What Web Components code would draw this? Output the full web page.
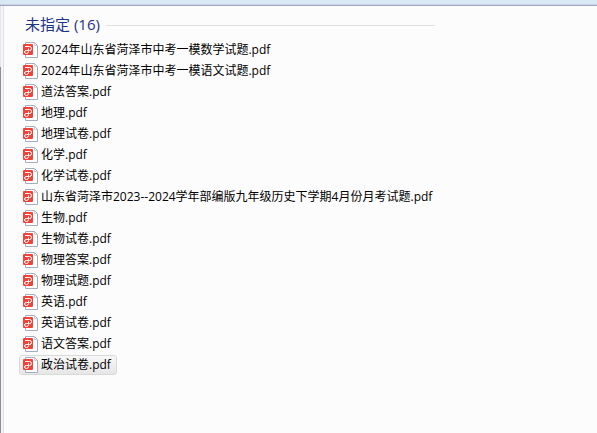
<!DOCTYPE html>
<html lang="zh-CN">
<head>
<meta charset="utf-8">
<title>未指定</title>
<style>
    body{
        margin: 0;
        font-family: "Open Sans", "Noto Sans CJK SC", sans-serif;
        font-size: 12px;
        color: #000;
    }
</style>
</head>
<body>
<explorer-pane>
    <file-group name="未指定" count="16">
        <file-item>2024年山东省菏泽市中考一模数学试题.pdf</file-item>
        <file-item>2024年山东省菏泽市中考一模语文试题.pdf</file-item>
        <file-item>道法答案.pdf</file-item>
        <file-item>地理.pdf</file-item>
        <file-item>地理试卷.pdf</file-item>
        <file-item>化学.pdf</file-item>
        <file-item>化学试卷.pdf</file-item>
        <file-item>山东省菏泽市2023--2024学年部编版九年级历史下学期4月份月考试题.pdf</file-item>
        <file-item>生物.pdf</file-item>
        <file-item>生物试卷.pdf</file-item>
        <file-item>物理答案.pdf</file-item>
        <file-item>物理试题.pdf</file-item>
        <file-item>英语.pdf</file-item>
        <file-item>英语试卷.pdf</file-item>
        <file-item>语文答案.pdf</file-item>
        <file-item selected>政治试卷.pdf</file-item>
    </file-group>
</explorer-pane>

<script>
const paneTemplate = document.createElement('template');
paneTemplate.innerHTML = `
    <style>
    :host{
        display: flex;
        flex-direction: column;
        min-height: 100vh;
        background: #fcfcfc;
    }
    .toolbar{
        height: 4px;
        background: #dae7f5;
        border-bottom: 1px solid #c5d3e5;
    }
    .body{
        flex: 1;
        display: flex;
        border-top: 1px solid #a0abc3;
    }
    .scroll{
        width: 1px;
        padding-top: 61px;
        background: #e6e6e6;
        display: flex;
    }
    .thumb{
        flex: 1;
        background: #8e8e8e;
    }
    .splitter{
        width: 2px;
        background: #f7f5f3;
        border-right: 1px solid #d5e3f3;
    }
    main{
        flex: 1;
        min-width: 0;
        padding: 6px 15px;
    }
    </style>
    <div class="toolbar"></div>
    <div class="body">
        <div class="scroll"><div class="thumb"></div></div>
        <div class="splitter"></div>
        <main><slot></slot></main>
    </div>
`;

class ExplorerPane extends HTMLElement{
    constructor(){
        super();
        this.attachShadow({mode: 'open'});
        this.shadowRoot.appendChild(paneTemplate.content.cloneNode(true));
    }
}

const groupTemplate = document.createElement('template');
groupTemplate.innerHTML = `
    <style>
    :host{
        display: block;
        max-width: 416px;
    }
    header{
        display: flex;
        align-items: center;
        gap: 6px;
        padding-left: 6px;
        height: 24px;
        margin-bottom: 4px;
    }
    h2{
        margin: 0;
        font-size: 15px;
        font-weight: normal;
        line-height: 20px;
        color: #1e3287;
        white-space: nowrap;
    }
    .rule{
        flex: 1;
        height: 1px;
        margin-top: 3px;
        background: #e0e0e0;
    }
    </style>
    <header>
        <h2></h2>
        <div class="rule"></div>
    </header>
    <div role="list"><slot></slot></div>
`;

class FileGroup extends HTMLElement{
    constructor(){
        super();
        this.attachShadow({mode: 'open'});
        this.shadowRoot.appendChild(groupTemplate.content.cloneNode(true));
    }

    connectedCallback(){
        this.shadowRoot.querySelector('h2').textContent =
        `${this.getAttribute('name')} (${this.getAttribute('count')})`;
    }
}

const itemTemplate = document.createElement('template');
itemTemplate.innerHTML = `
    <style>
    :host{
        display: flex;
        height: 21px;
    }
    .row{
        display: flex;
        align-items: center;
        gap: 3px;
        box-sizing: border-box;
        height: 20px;
        padding: 0 5px 0 3px;
        border: 1px solid transparent;
        border-radius: 3px;
        line-height: 18px;
        white-space: nowrap;
    }
    :host([selected]) .row{
        border-color: #d9d9d9;
        background: linear-gradient(#f8f8f8, #e6e6e6);
    }
    svg{
        flex: none;
    }
    </style>
    <div class="row">
        <svg width="15" height="16" viewBox="0 0 15 16" aria-hidden="true">
            <path d="M2.5 .5H11.5L14.5 3.5V15.5H2.5Z" fill="#fff" stroke="#a3adbd"/>
            <path d="M11.5 1V3.500H14" fill="none" stroke="#c9d0da"/>
            <rect y="2" width="10" height="11" rx="1" fill="#f0443a"/>
            <path d="M2 4.500H6.500Q8.500 4.500 8.500 6.500T6.500 8.500H3.500Q1.500 8.500 1.500 10T3.500 11.500Q5.500 11.500 5.500 9.500V6.500" fill="none" stroke="#fff"/>
        </svg>
        <span><slot></slot></span>
    </div>
`;

class FileItem extends HTMLElement{
    constructor(){
        super();
        this.attachShadow({mode: 'open'});
        this.shadowRoot.appendChild(itemTemplate.content.cloneNode(true));
    }

    connectedCallback(){
        this.setAttribute('role', 'listitem');
    }
}

window.customElements.define('explorer-pane', ExplorerPane);
window.customElements.define('file-group', FileGroup);
window.customElements.define('file-item', FileItem);
</script>
</body>
</html>
